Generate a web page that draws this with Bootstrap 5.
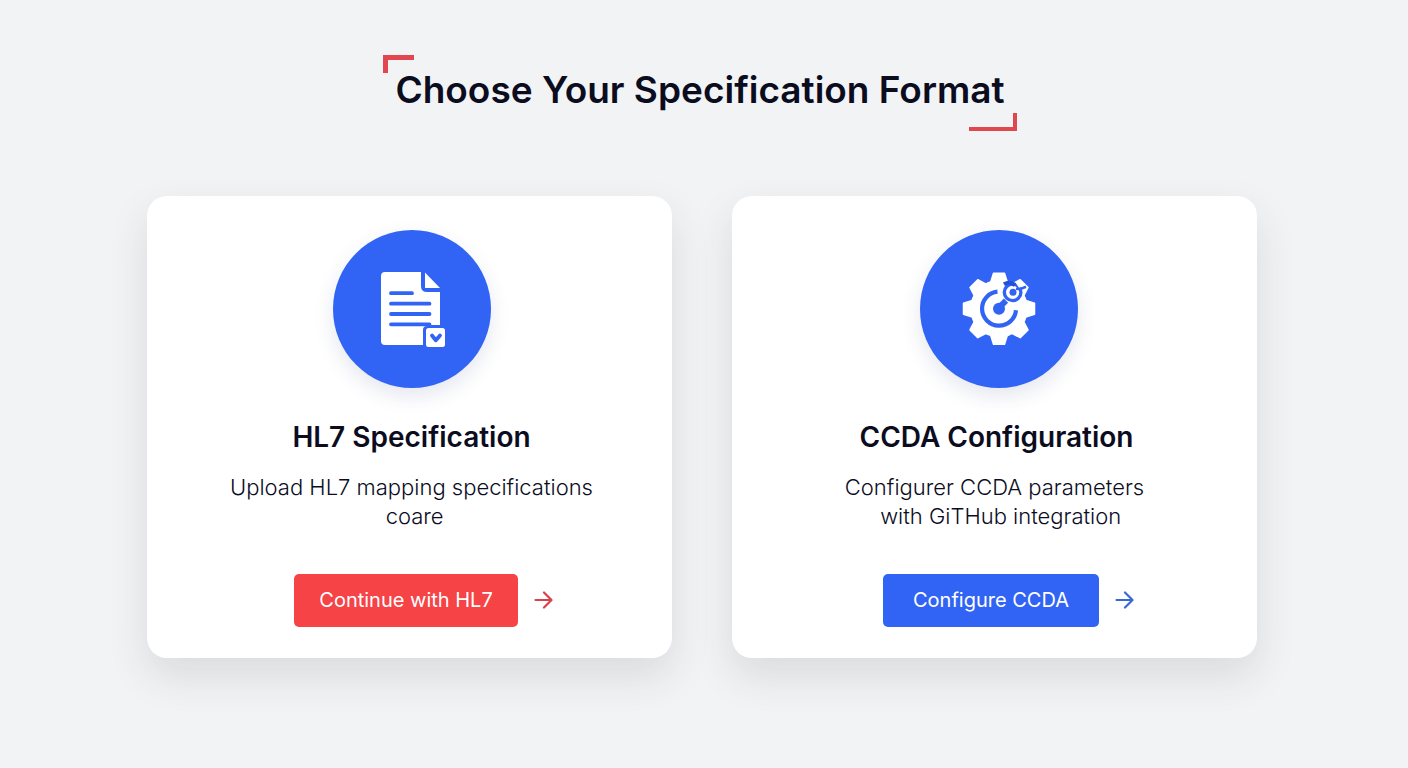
<!DOCTYPE html>
<html lang="en">
<head>
<meta charset="utf-8">
<meta name="viewport" content="width=device-width, initial-scale=1">
<title>Choose Your Specification Format</title>
<link href="https://cdn.jsdelivr.net/npm/bootstrap@5.3.0/dist/css/bootstrap.min.css" rel="stylesheet">
<style>
  :root { --ink: #0b0d1f; --brand-blue: #3164f4; --brand-red: #f54346; --accent-red: #e0474e; }
  body { font-family: Inter, "Liberation Sans", sans-serif; color: var(--ink); background: #f2f3f4; }
  .chooser { max-width: 1174px; padding-top: 55px; padding-bottom: 56px; }
  .page-title { font-size: 37px; line-height: 46px; font-weight: 600; padding: 12px 12px 18px; margin-bottom: 65px; }
  .page-title::before, .page-title::after { content: ""; position: absolute; border: 0 solid var(--accent-red); }
  .page-title::before { left: 0; top: 0; width: 31px; height: 18px; border-width: 5px 0 0 5px; }
  .page-title::after { right: 0; bottom: 0; width: 48px; height: 18px; border-width: 0 4px 4px 0; }
  .cards { --bs-gutter-x: 60px; --bs-gutter-y: 40px; }
  .option { border-radius: 20px; padding: 34px 24px 31px; box-shadow: 0 18px 40px rgba(40, 50, 70, .12); }
  .disc { width: 158px; height: 158px; border-radius: 50%; background: var(--brand-blue); box-shadow: 0 8px 20px rgba(40, 60, 120, .12); }
  .option-title { font-size: 28px; line-height: 34px; font-weight: 600; margin: 32px 0 19px; }
  .option-text { font-size: 22px; line-height: 29px; font-weight: 300; margin-bottom: 43px; }
  .actions { gap: 16px; padding-left: 28px; }
  .btn-option { --bs-btn-color: #fff; --bs-btn-hover-color: #fff; --bs-btn-border-width: 0; font-size: 20px; line-height: 29px; padding: 12px 25px; border-radius: 5px; }
  .btn-red { --bs-btn-bg: var(--brand-red); --bs-btn-hover-bg: #e0383a; }
  .btn-blue { --bs-btn-bg: var(--brand-blue); --bs-btn-hover-bg: #2654dc; padding-left: 30px; padding-right: 30px; }
  .go { line-height: 0; padding-bottom: 2px; }
  .go-red { color: #d9414c; }
  .go-blue { color: #3a68d6; }
</style>
</head>
<body>
<main class="container-fluid chooser ps-0 pe-1 text-center">
  <header class="pe-1">
    <h1 class="page-title d-inline-block position-relative">Choose Your Specification Format</h1>
  </header>
  <div class="row cards mx-0 justify-content-center">
    <section class="col-12 col-md-6">
      <div class="card option border-0 h-100">
        <div class="ps-1 d-flex justify-content-center">
          <div class="disc">
            <svg width="158" height="158" viewBox="0 0 158 158" aria-hidden="true">
              <path fill="#fff" d="M52 42H88V56Q88 62 94 62H107V95H98V96H94Q90 96 90 100V115H52Q48 115 48 111V46Q48 42 52 42Z"/>
              <path fill="#fff" d="M92 42.500L107 58H92Z"/>
              <path stroke="#3164f4" stroke-width="3.800" stroke-linecap="round" d="M58 63.200H79M58 73.700H96.500M58 84H96.500M58 94.300H96.500"/>
              <rect x="93" y="98" width="19" height="19" rx="2.500" fill="#fff"/>
              <path fill="none" stroke="#3164f4" stroke-width="3.800" stroke-linecap="round" stroke-linejoin="round" d="M99 105.500L102.800 110.300L107 105.500"/>
            </svg>
          </div>
        </div>
        <h2 class="option-title ps-1">HL7 Specification</h2>
        <p class="option-text ps-1">Upload HL7 mapping specifications<br>&nbsp;coare</p>
        <div class="actions d-flex justify-content-center align-items-center mt-auto">
          <button type="button" class="btn btn-option btn-red">Continue with HL7</button>
          <a href="#hl7" class="go go-red" aria-label="Continue with HL7">
            <svg width="19" height="20" viewBox="0 0 19 20" fill="none" stroke="currentColor" stroke-width="2.200" stroke-linecap="round" stroke-linejoin="round"><path d="M1.500 10H17M10 2.500L17.500 10L10 17.500"/></svg>
          </a>
        </div>
      </div>
    </section>
    <section class="col-12 col-md-6">
      <div class="card option border-0 h-100">
        <div class="ps-2 d-flex justify-content-center">
          <div class="disc">
            <svg width="158" height="158" viewBox="0 0 158 158" aria-hidden="true">
              <g transform="translate(79 78.700)">
                <g fill="#fff" stroke="#fff" stroke-width="1.500" stroke-linejoin="round">
                  <circle r="28"/>
                  <path id="tooth" d="M-8.500 -26L-5.500 -35.500H5.500L8.500 -26Z"/>
                  <use href="#tooth" transform="rotate(45)"/><use href="#tooth" transform="rotate(90)"/><use href="#tooth" transform="rotate(135)"/><use href="#tooth" transform="rotate(180)"/><use href="#tooth" transform="rotate(225)"/><use href="#tooth" transform="rotate(270)"/><use href="#tooth" transform="rotate(315)"/>
                </g>
                <g fill="none" stroke="#3164f4">
                  <path stroke-width="4.200" d="M-1.500 -17A17 17 0 1 0 17 1.500"/>
                  <circle r="6" fill="#3164f4" stroke="none"/>
                  <path stroke-width="6" d="M1 -2L7 -8"/>
                  <circle cx="13.600" cy="-16.400" r="8.300" fill="#fff" stroke-width="3.400"/>
                  <circle cx="14" cy="-16.400" r="3.500" fill="#3164f4" stroke="none"/>
                  <path stroke="#2450d8" stroke-width="4" d="M5 -24.500Q11 -28 16 -23.500"/>
                  <path stroke="#fff" stroke-width="2.600" d="M17.500 -27L20.500 -22.500L26 -24.500"/>
                  <path stroke-width="2.600" d="M17 -20L21 -19.500L27 -22"/>
                </g>
              </g>
            </svg>
          </div>
        </div>
        <h2 class="option-title ps-1">CCDA Configuration</h2>
        <p class="option-text">Configurer CCDA parameters<br>&nbsp; with GiTHub integration</p>
        <div class="actions d-flex justify-content-center align-items-center mt-auto">
          <button type="button" class="btn btn-option btn-blue">Configure CCDA</button>
          <a href="#ccda" class="go go-blue" aria-label="Configure CCDA">
            <svg width="19" height="20" viewBox="0 0 19 20" fill="none" stroke="currentColor" stroke-width="2.200" stroke-linecap="round" stroke-linejoin="round"><path d="M1.500 10H17M10 2.500L17.500 10L10 17.500"/></svg>
          </a>
        </div>
      </div>
    </section>
  </div>
</main>
<script src="https://cdn.jsdelivr.net/npm/bootstrap@5.3.0/dist/js/bootstrap.bundle.min.js"></script>
</body>
</html>
